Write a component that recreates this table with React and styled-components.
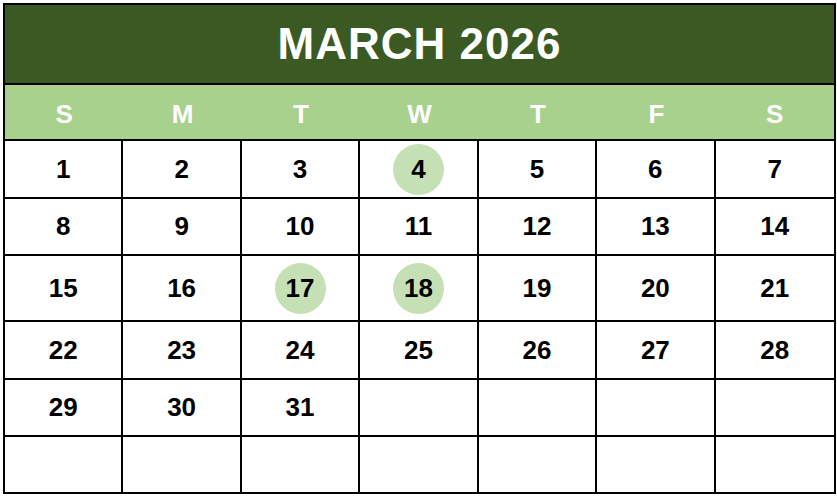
import React from "react";
import styled, { createGlobalStyle } from "styled-components";

const Global = createGlobalStyle`
  html, body { margin: 0; padding: 0; background: #ffffff; }
  body { font-family: "Liberation Sans", Arial, sans-serif; }
`;

const Calendar = styled.div`
  box-sizing: border-box;
  margin: 3px 0 0 3px;
  width: 833px;
  border: 2px solid #000;
  display: flex;
  flex-direction: column;
  font-family: "Liberation Sans", Arial, sans-serif;
  font-weight: 700;
`;

const Title = styled.div`
  box-sizing: border-box;
  height: 80px;
  background: #3b5a23;
  border-bottom: 2px solid #000;
  color: #fff;
  font-size: 44px;
  letter-spacing: 1px;
  display: flex;
  align-items: center;
  justify-content: center;
`;

const WeekHeader = styled.div`
  display: grid;
  grid-template-columns: repeat(7, 1fr);
  height: 54px;
  background: #a9d18e;
`;

const DayName = styled.div`
  display: flex;
  align-items: center;
  justify-content: center;
  padding-top: 5px;
  color: #fff;
  font-size: 26px;
`;

const Grid = styled.div`
  display: grid;
  grid-template-columns: repeat(7, 1fr);
  grid-template-rows: 58px 57px 66px 58px 57px 57px;
`;

const Cell = styled.div`
  box-sizing: border-box;
  border-top: 2px solid #000;
  border-right: ${(p) => (p.$last ? "none" : "2px solid #000")};
  display: flex;
  align-items: center;
  justify-content: center;
  background: #fff;
`;

const Num = styled.span`
  display: flex;
  align-items: center;
  justify-content: center;
  width: 51px;
  height: 51px;
  border-radius: 50%;
  background: ${(p) => (p.$marked ? "#c5e0b4" : "transparent")};
  color: #000;
  font-size: 26px;
`;

const days = ["S", "M", "T", "W", "T", "F", "S"];
const marked = new Set([4, 17, 18]);
const cells = Array.from({ length: 42 }, (_, i) => (i < 31 ? i + 1 : null));

export default function App() {
  return (
    <>
      <Global />
      <Calendar>
        <Title>MARCH 2026</Title>
        <WeekHeader>
          {days.map((d, i) => (
            <DayName key={i}>{d}</DayName>
          ))}
        </WeekHeader>
        <Grid>
          {cells.map((n, i) => (
            <Cell key={i} $last={i % 7 === 6}>
              {n && <Num $marked={marked.has(n)}>{n}</Num>}
            </Cell>
          ))}
        </Grid>
      </Calendar>
    </>
  );
}
